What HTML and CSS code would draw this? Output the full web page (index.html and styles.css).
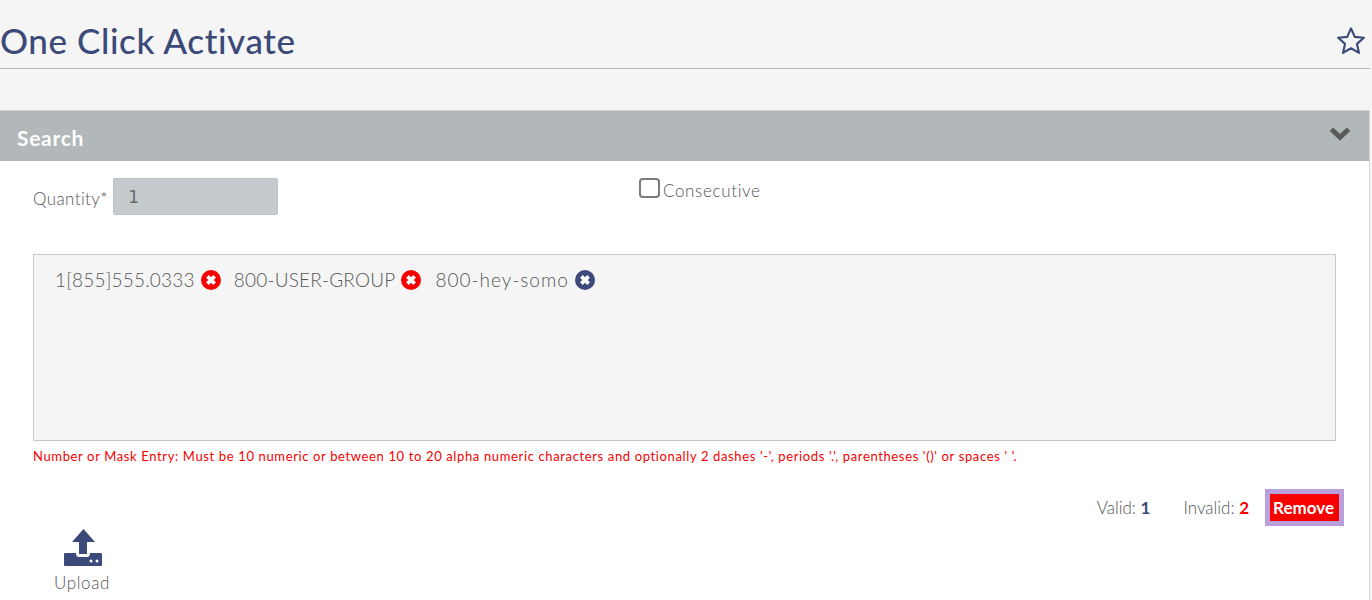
FILE: index.html
```html
<!DOCTYPE html>
<html lang="en">
<head>
<meta charset="utf-8">
<title>One Click Activate</title>
<link rel="stylesheet" href="styles.css">
</head>
<body>
<header class="page-head">
  <h1 class="page-title">One Click Activate</h1>
  <svg class="star" viewBox="0 0 28 28" width="30" height="30" aria-hidden="true"><path d="M14 2.2l3.5 7.9 8.5.9-6.4 5.7 1.9 8.400L14 20.800l-7.500 4.300 1.900-8.400L2 11l8.500-.9z" fill="none" stroke="#3b4a78" stroke-width="2" stroke-linejoin="round"/></svg>
</header>
<section class="panel">
  <div class="panel-head">
    <h2 class="panel-title">Search</h2>
    <svg class="chevron" viewBox="0 0 22 14" width="24" height="15" aria-hidden="true"><path d="M3 3l8 7.500L19 3" fill="none" stroke="#5a5a5a" stroke-width="4.600"/></svg>
  </div>
  <div class="panel-body">
    <div class="filters">
      <div class="qty">
        <label class="qty-label">Quantity*</label>
        <div class="qty-input">1</div>
      </div>
      <label class="consecutive"><span class="checkbox"></span>Consecutive</label>
    </div>
    <div class="tag-box">
      <span class="tag">1[855]555.0333<svg class="x" viewBox="0 0 20 20" width="20" height="20" aria-hidden="true"><circle class="x-bad" cx="10" cy="10" r="10"/><path d="M6.400 6.400l7.200 7.200M13.600 6.400l-7.200 7.200" class="x-mark"/></svg></span>
      <span class="tag">800-USER-GROUP<svg class="x" viewBox="0 0 20 20" width="20" height="20" aria-hidden="true"><circle class="x-bad" cx="10" cy="10" r="10"/><path d="M6.400 6.400l7.200 7.200M13.600 6.400l-7.200 7.200" class="x-mark"/></svg></span>
      <span class="tag tag-wide">800-hey-somo<svg class="x" viewBox="0 0 20 20" width="20" height="20" aria-hidden="true"><circle class="x-ok" cx="10" cy="10" r="10"/><path d="M6.400 6.400l7.200 7.200M13.600 6.400l-7.200 7.200" class="x-mark"/></svg></span>
    </div>
    <p class="hint">Number or Mask Entry: Must be 10 numeric or between 10 to 20 alpha numeric characters and optionally 2 dashes '-', periods '.', parentheses '()' or spaces ' '.</p>
    <div class="summary">
      <span class="count">Valid: <b class="num-ok">1</b></span>
      <span class="count">Invalid: <b class="num-bad">2</b></span>
      <button class="remove">Remove</button>
    </div>
    <div class="upload">
      <svg viewBox="0 0 38 37" width="38" height="37" aria-hidden="true"><path d="M19.500 0L31 13H23V25H15V13H8z" fill="#3b4a78"/><path d="M1.500 24H12V25C12 27 13.500 28 15 28H23C24.500 28 26 27 26 25V24H36.500C37.500 24 38 24.500 38 25.500V35.500C38 36.500 37.500 37 36.500 37H1.500C.5 37 0 36.500 0 35.500V25.500C0 24.500 .5 24 1.500 24Z" fill="#3b4a78"/><circle cx="27" cy="32" r="1.500" fill="#fff"/><circle cx="33" cy="32" r="1.500" fill="#fff"/></svg>
      <span class="upload-label">Upload</span>
    </div>
  </div>
</section>
</body>
</html>
```
FILE: styles.css
```css
* { box-sizing: border-box; }
html, body { margin: 0; height: 100%; overflow: hidden; }
body {
  background: #f5f5f5;
  font-family: "Lato", "Liberation Sans", sans-serif;
  color: #5f6368;
  padding-right: 2px;
}
.page-head {
  height: 69px;
  border-bottom: 1px solid #b1b6b9;
  display: flex;
  align-items: center;
  justify-content: space-between;
  padding: 13px 4px 0 0;
}
.page-title {
  margin: 0;
  font-size: 35px;
  font-weight: 500;
  letter-spacing: .6px;
  color: #3b4a78;
  line-height: 1;
}
.star { margin-top: 1px; }
.panel {
  margin-top: 41px;
  height: 500px;
  background: #fff;
  border-top: 1px solid #d6d6d6;
  border-right: 1px solid #d6d6d6;
}
.panel-head {
  height: 50px;
  background: #b2b7b9;
  display: flex;
  align-items: center;
  justify-content: space-between;
  padding: 0 17px 0 17px;
}
.panel-title { margin: 2px 0 0; font-size: 21px; font-weight: 700; color: #fff; letter-spacing: .7px; }
.chevron { margin-bottom: 6px; }
.panel-body { padding: 17px 33px 0 33px; }
.filters { display: flex; height: 76px; }
.qty { display: flex; align-items: flex-start; width: 606px; }
.qty-label { font-size: 17px; font-weight: 300; margin: 10px 5px 0 0; color: #555; letter-spacing: .4px; }
.qty-input {
  width: 165px;
  height: 37px;
  background: #c5cacd;
  border: 1px solid #bcc1c4;
  border-radius: 2px;
  font-family: "DejaVu Sans Mono", monospace;
  font-size: 18px;
  color: #6b6b6b;
  padding: 7px 14px;
}
.consecutive { display: flex; align-items: center; height: 20px; font-size: 17px; font-weight: 300; color: #555; margin-top: 2px; letter-spacing: .65px; }
.checkbox {
  width: 21px; height: 20px;
  border: 2px solid #7a7a7a;
  border-radius: 4px;
  background: #fff;
  margin-right: 3px;
  margin-top: -4px;
}
.tag-box {
  height: 187px;
  background: #f5f5f5;
  border: 1px solid #c8c8c8;
  padding: 14px 21px;
  display: flex;
  align-items: flex-start;
  gap: 13px;
}
.tag { display: inline-flex; align-items: center; gap: 7px; font-size: 19px; font-weight: 300; color: #555; line-height: 22px; letter-spacing: .2px; }
.tag-wide { letter-spacing: 1px; margin-left: 1px; }
.tag .x { margin-left: -1px; }
.x { flex: none; }
.x-bad { fill: #f60000; }
.x-ok { fill: #3b4a78; }
.x-mark { stroke: #fff; stroke-width: 3.800; fill: none; }
.hint { margin: 8px 0 0; font-size: 13px; font-weight: 400; color: #f60000; line-height: 15px; letter-spacing: .635px; white-space: nowrap; }
.summary {
  display: flex;
  justify-content: flex-end;
  align-items: center;
  margin-top: 25px;
  height: 37px;
  margin-right: -8px;
  font-size: 17px;
  font-weight: 300;
  color: #555;
}
.count { margin-right: 33px; }
.count + .count { margin-right: 16px; }
.num-ok { color: #3b4a78; font-weight: 700; }
.num-bad { color: #f60000; font-weight: 700; }
.remove {
  background: #f60000;
  color: #fff;
  border: 5px solid #b9a0dd;
  font-family: inherit;
  font-size: 17px;
  font-weight: 700;
  height: 37px;
  width: 79px;
  padding: 0 2px 0 0;
}
.upload {
  display: flex;
  flex-direction: column;
  align-items: center;
  width: 100px;
  margin-top: 3px;
}
.upload-label { font-size: 17px; font-weight: 300; color: #555; margin-top: 6px; margin-left: -2px; letter-spacing: .6px; }
```
